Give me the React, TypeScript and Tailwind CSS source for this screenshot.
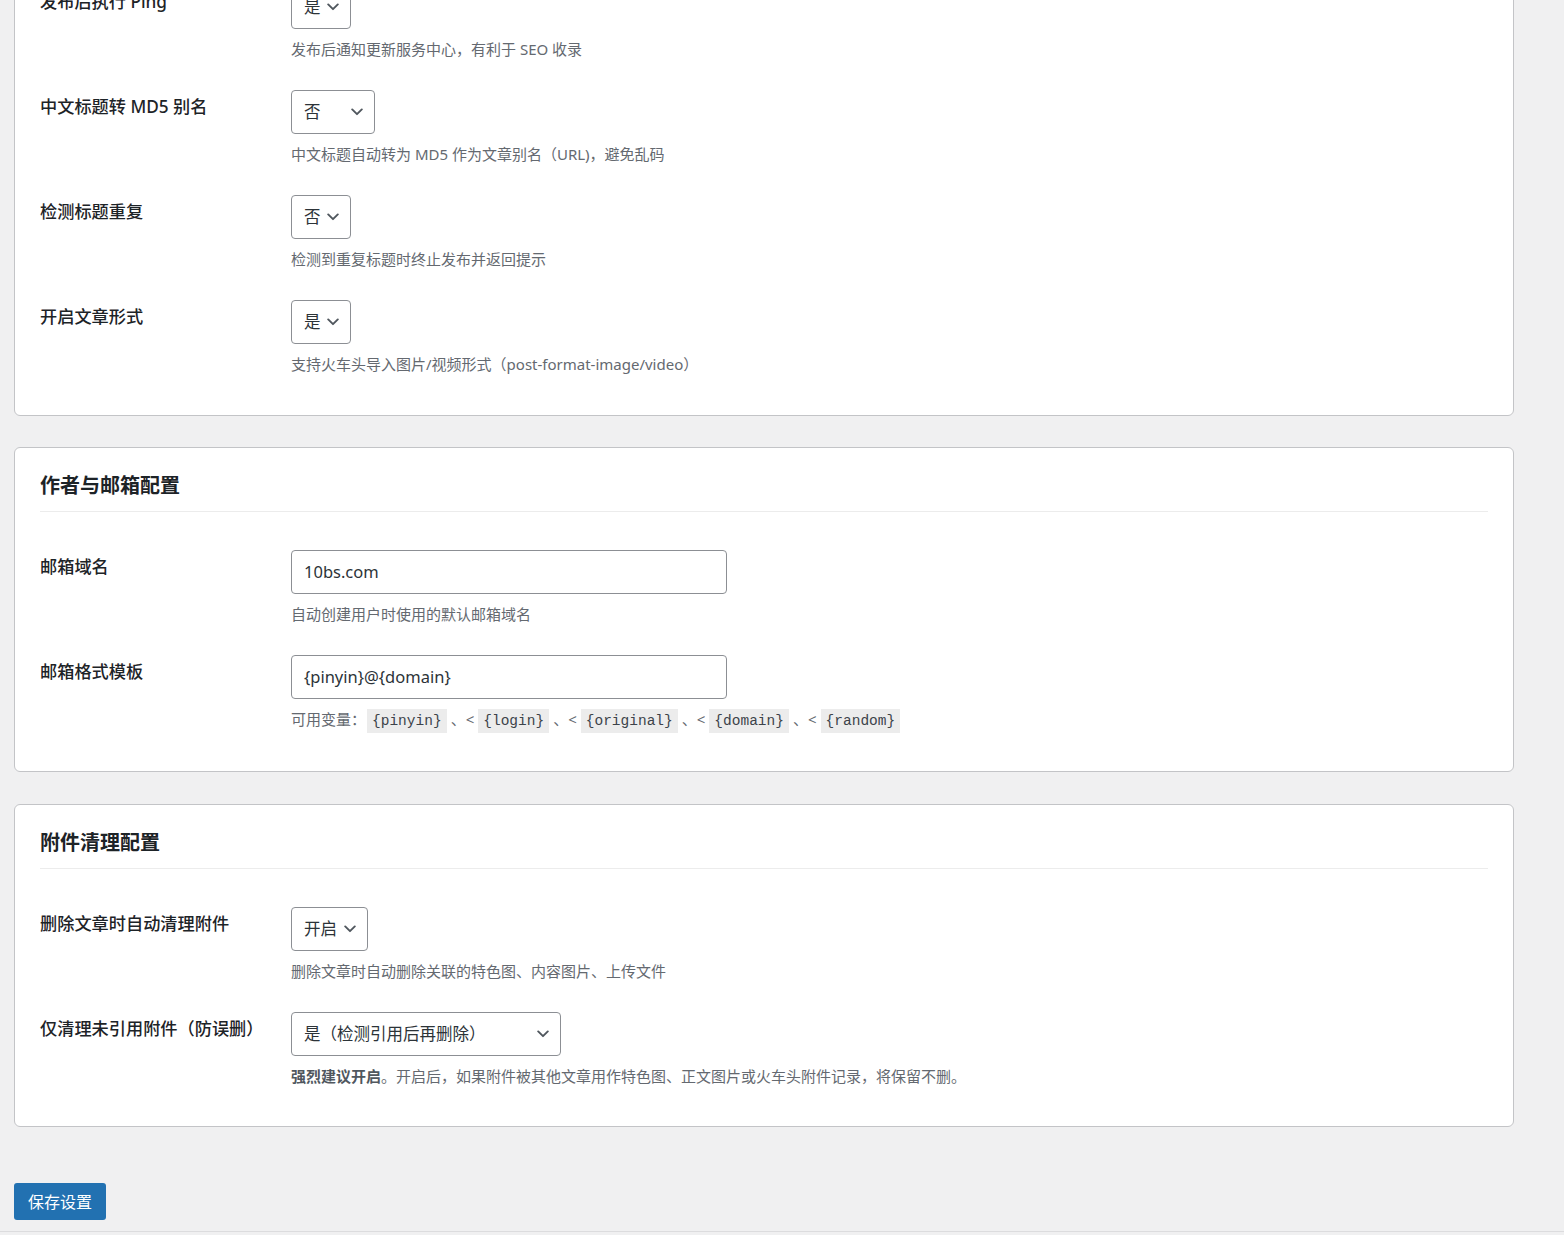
import React from "react";

const Chevron = () => (
  <svg width="12" height="8" viewBox="0 0 12 8" fill="none" className="shrink-0">
    <path d="M1.2 1.4 6 6.2l4.8-4.8" stroke="#50575e" strokeWidth="1.9" strokeLinecap="round" strokeLinejoin="round" />
  </svg>
);

function Select({ value, width }: { value: string; width: string }) {
  return (
    <div
      className={`${width} h-[44px] flex items-center justify-between pl-[12px] pr-[11px] border border-[#8c8f94] rounded-[4px] bg-white text-[16.5px] text-[#2c3338]`}
    >
      <span className="leading-none">{value}</span>
      <Chevron />
    </div>
  );
}

function Input({ value }: { value: string }) {
  return (
    <div className="w-[436px] h-[44px] flex items-center px-[12px] border border-[#8c8f94] rounded-[4px] bg-white text-[16.5px] text-[#2c3338]">
      {value}
    </div>
  );
}

function Row({ label, control, desc }: { label: string; control: React.ReactNode; desc: React.ReactNode }) {
  return (
    <div className="flex h-[105px]">
      <div className="w-[251px] shrink-0 pt-[20px] text-[17.2px] leading-6 text-[#1d2327] font-medium">{label}</div>
      <div className="pt-[15px]">
        {control}
        <div className="mt-[10px] text-[15px] leading-5 text-[#646970] whitespace-nowrap">{desc}</div>
      </div>
    </div>
  );
}

function Card({ title, className, children }: { title: string; className?: string; children: React.ReactNode }) {
  return (
    <section className={`w-[1500px] bg-white border border-[#c3c4c7] rounded-[6px] px-[25px] pt-[24px] ${className ?? ""}`}>
      <h2 className="text-[20px] leading-7 font-bold text-[#1d2327] pb-[11px] border-b border-[#ececec]">{title}</h2>
      <div className="mt-[23px]">{children}</div>
    </section>
  );
}

const Code = ({ children }: { children: string }) => (
  <code className="bg-[#ececec] px-[5px] py-[4px] mx-[1px] font-['Liberation_Mono',monospace] text-[14.5px] text-[#3c434a]">
    {children}
  </code>
);

const Sep = () => <span className="mx-[3px]">、&lt;</span>;

export default function App() {
  return (
    <div className="min-h-[1235px] bg-[#f0f0f1] overflow-hidden font-['Noto_Sans','Noto_Sans_CJK_SC',sans-serif]">
      <div className="pl-[14px]">
        <Card title="发布配置" className="mt-[-118px] pb-[25px]">
          <Row label="发布后执行 Ping" control={<Select value="是" width="w-[60px]" />} desc="发布后通知更新服务中心，有利于 SEO 收录" />
          <Row label="中文标题转 MD5 别名" control={<Select value="否" width="w-[84px]" />} desc="中文标题自动转为 MD5 作为文章别名（URL)，避免乱码" />
          <Row label="检测标题重复" control={<Select value="否" width="w-[60px]" />} desc="检测到重复标题时终止发布并返回提示" />
          <Row label="开启文章形式" control={<Select value="是" width="w-[60px]" />} desc="支持火车头导入图片/视频形式（post-format-image/video）" />
        </Card>

        <Card title="作者与邮箱配置" className="mt-[31px] pb-[26px]">
          <Row label="邮箱域名" control={<Input value="10bs.com" />} desc="自动创建用户时使用的默认邮箱域名" />
          <Row
            label="邮箱格式模板"
            control={<Input value="{pinyin}@{domain}" />}
            desc={
              <>
                可用变量：
                <Code>{"{pinyin}"}</Code>
                <Sep />
                <Code>{"{login}"}</Code>
                <Sep />
                <Code>{"{original}"}</Code>
                <Sep />
                <Code>{"{domain}"}</Code>
                <Sep />
                <Code>{"{random}"}</Code>
              </>
            }
          />
        </Card>

        <Card title="附件清理配置" className="mt-[32px] pb-[24px]">
          <Row label="删除文章时自动清理附件" control={<Select value="开启" width="w-[77px]" />} desc="删除文章时自动删除关联的特色图、内容图片、上传文件" />
          <Row
            label="仅清理未引用附件（防误删）"
            control={<Select value="是（检测引用后再删除）" width="w-[270px]" />}
            desc={
              <>
                <strong className="font-bold text-[#50575e]">强烈建议开启</strong>。开启后，如果附件被其他文章用作特色图、正文图片或火车头附件记录，将保留不删。
              </>
            }
          />
        </Card>

        <button className="mt-[56px] h-[37px] px-[14px] rounded-[3px] bg-[#2271b1] text-white text-[16px] leading-none">
          保存设置
        </button>
      </div>
      <div className="mt-[11px] border-t border-[#dcdcde] h-[10px] bg-[#f0f0f1]" />
    </div>
  );
}
